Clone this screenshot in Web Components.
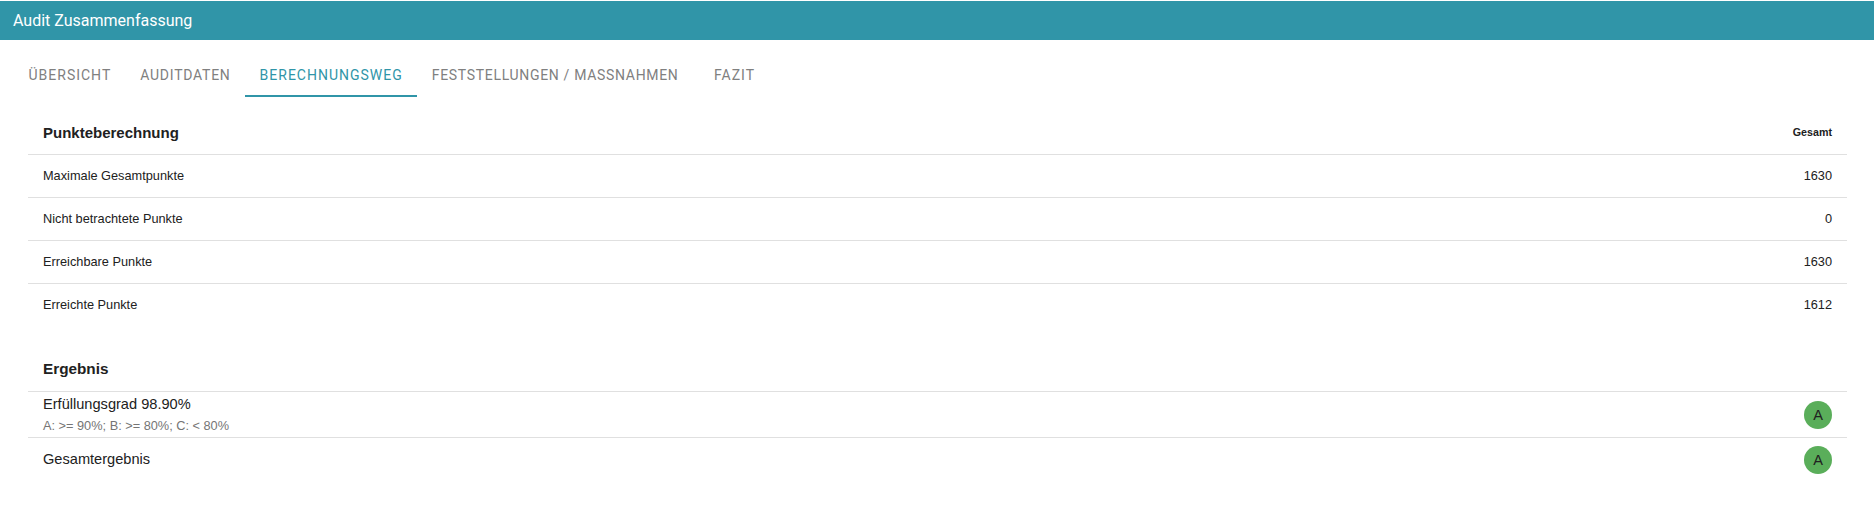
<!DOCTYPE html>
<html lang="de">
<head>
<meta charset="utf-8">
<title>Audit Zusammenfassung</title>
<style>
  html, body { margin: 0; background: #fff; }
  body { font-family: "Liberation Sans", Arial, sans-serif; color: #212529; }
</style>
</head>
<body>
<audit-app>
  <audit-header>Audit Zusammenfassung</audit-header>
  <audit-tabs active="2" labels="Übersicht|Auditdaten|Berechnungsweg|Feststellungen / Maßnahmen|Fazit"></audit-tabs>
  <audit-panel>
    <points-table heading="Punkteberechnung" total="Gesamt">
      <points-row value="1630">Maximale Gesamtpunkte</points-row>
      <points-row value="0">Nicht betrachtete Punkte</points-row>
      <points-row value="1630">Erreichbare Punkte</points-row>
      <points-row value="1612">Erreichte Punkte</points-row>
    </points-table>
    <result-table heading="Ergebnis">
      <result-row grade="A" hint="A: &gt;= 90%; B: &gt;= 80%; C: &lt; 80%">Erfüllungsgrad 98.90%</result-row>
      <result-row grade="A">Gesamtergebnis</result-row>
    </result-table>
  </audit-panel>
</audit-app>

<script>
class AuditApp extends HTMLElement {
  constructor() {
    super();
    this.attachShadow({ mode: 'open' });
    this.shadowRoot.innerHTML = `
      <style>
        :host { display: block; padding-top: 1px; }
      </style>
      <slot></slot>
    `;
  }
}

class AuditHeader extends HTMLElement {
  constructor() {
    super();
    this.attachShadow({ mode: 'open' });
    this.shadowRoot.innerHTML = `
      <style>
        :host {
          display: flex;
          align-items: center;
          height: 39px;
          padding: 0 13px;
          background-color: #3095a8;
          color: #fff;
          font: 16px "Roboto", sans-serif;
        }
      </style>
      <slot></slot>
    `;
  }
}

class AuditTabs extends HTMLElement {
  constructor() {
    super();
    this.attachShadow({ mode: 'open' });
  }

  connectedCallback() {
    const active = Number(this.getAttribute('active'));
    const labels = this.getAttribute('labels').split('|');
    this.shadowRoot.innerHTML = `
      <style>
        :host {
          display: flex;
          padding: 15px 14px 0;
          font: 14px "Roboto", sans-serif;
          letter-spacing: 1px;
          text-transform: uppercase;
          color: #808080;
        }
        div {
          display: flex;
          align-items: center;
          justify-content: center;
          box-sizing: border-box;
          height: 42px;
          min-width: 83px;
          padding: 0 14.5px;
          border-bottom: 2px solid transparent;
        }
        div:nth-of-type(2) { letter-spacing: 0.75px; }
        div:nth-of-type(4) { letter-spacing: 0.68px; }
        .active {
          color: #3095a8;
          border-bottom-color: #3095a8;
        }
      </style>
      ${labels.map((label, i) => `<div class="${i === active ? 'active' : ''}">${label}</div>`).join('')}
    `;
  }
}

class AuditPanel extends HTMLElement {
  constructor() {
    super();
    this.attachShadow({ mode: 'open' });
    this.shadowRoot.innerHTML = `
      <style>
        :host {
          display: block;
          padding: 15px 27px 0 28px;
        }
      </style>
      <slot></slot>
    `;
  }
}

class PointsTable extends HTMLElement {
  constructor() {
    super();
    this.attachShadow({ mode: 'open' });
  }

  connectedCallback() {
    this.shadowRoot.innerHTML = `
      <style>
        :host { display: block; }
        header {
          display: flex;
          justify-content: space-between;
          align-items: center;
          box-sizing: border-box;
          height: 42px;
          padding: 0 15px 2px;
          font: bold 15px "Liberation Sans", sans-serif;
          color: #212121;
        }
        span {
          font-size: 10.7px;
        }
      </style>
      <header>${this.getAttribute('heading')}<span>${this.getAttribute('total')}</span></header>
      <slot></slot>
    `;
  }
}

class PointsRow extends HTMLElement {
  constructor() {
    super();
    this.attachShadow({ mode: 'open' });
  }

  connectedCallback() {
    this.shadowRoot.innerHTML = `
      <style>
        :host {
          display: flex;
          justify-content: space-between;
          align-items: center;
          box-sizing: border-box;
          height: 43px;
          padding: 0 15px 2px;
          border-top: 1px solid #e0e0e0;
          font: 12.75px "Liberation Sans", sans-serif;
          color: #212121;
        }
      </style>
      <slot></slot><span>${this.getAttribute('value')}</span>
    `;
  }
}

class ResultTable extends HTMLElement {
  constructor() {
    super();
    this.attachShadow({ mode: 'open' });
  }

  connectedCallback() {
    this.shadowRoot.innerHTML = `
      <style>
        :host { display: block; margin-top: 23px; }
        header {
          display: flex;
          align-items: center;
          box-sizing: border-box;
          height: 42px;
          padding: 0 15px 2px;
          font: bold 15.3px "Liberation Sans", sans-serif;
          color: #212121;
        }
      </style>
      <header>${this.getAttribute('heading')}</header>
      <slot></slot>
    `;
  }
}

class ResultRow extends HTMLElement {
  constructor() {
    super();
    this.attachShadow({ mode: 'open' });
  }

  connectedCallback() {
    const hint = this.getAttribute('hint');
    this.shadowRoot.innerHTML = `
      <style>
        :host {
          display: flex;
          justify-content: space-between;
          align-items: center;
          box-sizing: border-box;
          height: 46px;
          padding: 0 15px ${hint ? 0 : 2}px;
          border-top: 1px solid #e0e0e0;
          font: 14.6px "Liberation Sans", sans-serif;
          color: #212121;
        }
        .label {
          margin-top: -2px;
        }
        .hint {
          margin-top: 6px;
          margin-bottom: -1px;
          font-size: 12.75px;
          line-height: 15px;
          color: #757575;
        }
        .grade {
          display: flex;
          align-items: center;
          justify-content: center;
          width: 28px;
          height: 28px;
          border-radius: 50%;
          background-color: #5aae5a;
        }
      </style>
      <div class="label">
        <slot></slot>
        ${hint ? `<div class="hint">${hint.replace(/&/g, '&amp;').replace(/</g, '&lt;')}</div>` : ''}
      </div>
      <div class="grade">${this.getAttribute('grade')}</div>
    `;
  }
}

customElements.define('audit-app', AuditApp);
customElements.define('audit-header', AuditHeader);
customElements.define('audit-tabs', AuditTabs);
customElements.define('audit-panel', AuditPanel);
customElements.define('points-table', PointsTable);
customElements.define('points-row', PointsRow);
customElements.define('result-table', ResultTable);
customElements.define('result-row', ResultRow);
</script>
</body>
</html>
